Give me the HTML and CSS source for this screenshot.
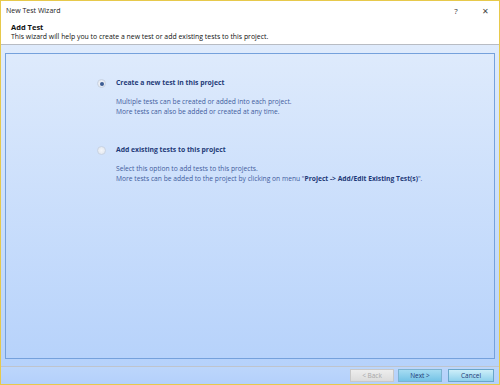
FILE: index.html
```html
<!DOCTYPE html>
<html>
<head>
<meta charset="utf-8">
<link rel="stylesheet" href="styles.css">
</head>
<body>
<div class="window">
  <div class="titlebar">
    <span class="title">New Test Wizard</span>
    <span class="tb-btns"><span class="help">?</span><span class="close">✕</span></span>
  </div>
  <div class="header">
    <div class="h-title">Add Test</div>
    <div class="h-sub">This wizard will help you to create a new test or add existing tests to this project.</div>
  </div>
  <div class="body">
    <div class="panel">
      <div class="option">
        <span class="radio checked"></span>
        <div class="opt-text">
          <div class="opt-title">Create a new test in this project</div>
          <div class="opt-desc">Multiple tests can be created or added into each project.<br>More tests can also be added or created at any time.</div>
        </div>
      </div>
      <div class="option">
        <span class="radio"></span>
        <div class="opt-text">
          <div class="opt-title">Add existing tests to this project</div>
          <div class="opt-desc">Select this option to add tests to this projects.<br>More tests can be added to the project by clicking on menu "<b>Project -&gt; Add/Edit Existing Test(s)</b>".</div>
        </div>
      </div>
    </div>
  </div>
  <div class="footer">
    <button class="btn disabled">&lt; Back</button>
    <button class="btn next">Next &gt;</button>
    <button class="btn cancel">Cancel</button>
  </div>
</div>
</body>
</html>
```
FILE: styles.css
```css
* { box-sizing: border-box; }
html, body { margin: 0; padding: 0; }
body {
  width: 500px;
  height: 385px;
  font-family: "Open Sans", "Noto Sans", sans-serif;
  overflow: hidden;
}
.window {
  width: 500px;
  height: 385px;
  border: 1px solid #e7c94b;
  display: flex;
  flex-direction: column;
  background: #fff;
}
.titlebar {
  height: 18px;
  display: flex;
  align-items: center;
  justify-content: space-between;
  padding: 1px 0 0 5px;
  background: #fff;
}
.title { font-size: 7px; color: #222; }
.tb-btns { display: flex; align-items: center; }
.help { font-size: 8px; color: #333; width: 28px; text-align: center; margin-right: 1px; }
.close { font-size: 8px; color: #444; width: 28px; text-align: center; }
.header {
  height: 26px;
  padding: 3px 10px 0;
  border-bottom: 1px solid #b8bcc3;
  background: #fff;
}
.h-title { font-size: 7.5px; font-weight: bold; color: #111; line-height: 10px; }
.h-sub { font-size: 6.9px; color: #111; line-height: 10px; }
.body {
  flex: 1;
  padding: 8px 4px 7px 4px;
  background: linear-gradient(#dfebfc, #b6d2fb);
  display: flex;
}
.panel {
  flex: 1;
  border: 1px solid #75a1dc;
  padding: 24px 0 0 91px;
}
.option { display: flex; margin-bottom: 28px; }
.radio {
  width: 9px;
  height: 9px;
  border-radius: 50%;
  border: 1px solid #c9d3e2;
  background: radial-gradient(#f4f6fa, #dfe4ec);
  margin-top: 1px;
  margin-right: 10px;
  position: relative;
  flex: none;
}
.radio.checked::after {
  content: "";
  position: absolute;
  left: 1.5px;
  top: 1.5px;
  width: 4px;
  height: 4px;
  border-radius: 50%;
  background: #3d5d94;
}
.opt-title { font-size: 6.8px; font-weight: bold; color: #1e3a78; line-height: 10px; margin-bottom: 9px; }
.opt-desc { font-size: 6.7px; color: #3f5c9c; line-height: 10px; }
.opt-desc b { color: #1e3a78; }
.footer {
  height: 18px;
  border-top: 1px solid #bfc4cc;
  background: linear-gradient(#bcd6fb, #b4d0fb);
  display: flex;
  justify-content: flex-end;
  align-items: flex-start;
  padding: 2px 5px 0 0;
}
.btn {
  height: 13px;
  width: 44px;
  font-family: "Open Sans", "Noto Sans", sans-serif;
  font-size: 6.5px;
  padding: 0;
  border: 1px solid #8fb7d4;
  margin-left: 4px;
  color: #1e3a78;
}
.btn.disabled {
  background: linear-gradient(#ededed, #dcdcdc);
  border-color: #c8c8c8;
  color: #a7a7a7;
}
.btn.next {
  background: linear-gradient(#a6dcf2, #74c3e6);
  border-color: #7db3d0;
}
.btn.cancel {
  margin-left: 6px;
  width: 46px;
  background: linear-gradient(#cdeef9, #8fd1ec);
  border-color: #6aa6c9;
}
```
